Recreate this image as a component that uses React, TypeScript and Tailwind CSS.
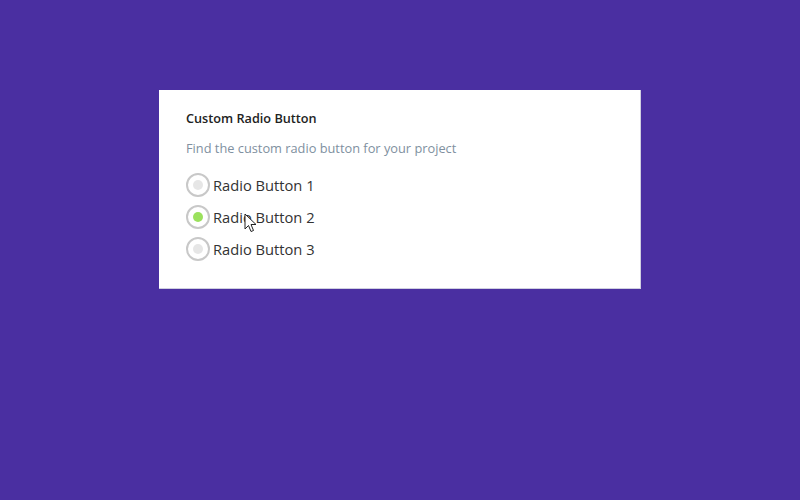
import React, { useState } from "react";

const options = ["Radio Button 1", "Radio Button 2", "Radio Button 3"];

export default function App() {
  const [selected, setSelected] = useState(1);
  return (
    <div
      className="w-[800px] h-[500px] bg-[#4a2fa1] flex justify-center items-start pt-[90px]"
      style={{ fontFamily: '"Open Sans", "Noto Sans", sans-serif' }}
    >
      <div className="relative w-[482px] h-[199px] bg-white border-r border-b border-[#cfcfe0] pl-[27px] pt-[19px]">
        <h1 className="text-[12.7px] leading-[18px] font-semibold text-[#222]">Custom Radio Button</h1>
        <p className="mt-[12px] text-[12.8px] leading-[18px] text-[#8090a0]">
          Find the custom radio button for your project
        </p>
        <div className="mt-[16px] flex flex-col gap-[8px]">
          {options.map((o, i) => (
            <label key={o} className="flex items-center h-[24px] cursor-pointer" onClick={() => setSelected(i)}>
              <span className="w-[24px] h-[24px] rounded-full border-2 border-[#c8c8c8] flex items-center justify-center">
                <span
                  className={
                    i === selected
                      ? "w-[10px] h-[10px] rounded-full bg-[#9be15d]"
                      : "w-[10px] h-[10px] rounded-full bg-[#e6e6e6]"
                  }
                />
              </span>
              <span className="ml-[3px] text-[14.7px] leading-[20px] text-[#333]">{o}</span>
            </label>
          ))}
        </div>
        <svg
          className="absolute left-[85px] top-[123px]"
          width="14"
          height="21"
          viewBox="0 0 14 21"
        >
          <path
            d="M1 1 L1 16 L4.5 12.5 L7 18.5 L9.5 17.5 L7 11.5 L12 11.5 Z"
            fill="white"
            stroke="#222"
            strokeWidth="1"
            strokeLinejoin="round"
          />
        </svg>
      </div>
    </div>
  );
}
